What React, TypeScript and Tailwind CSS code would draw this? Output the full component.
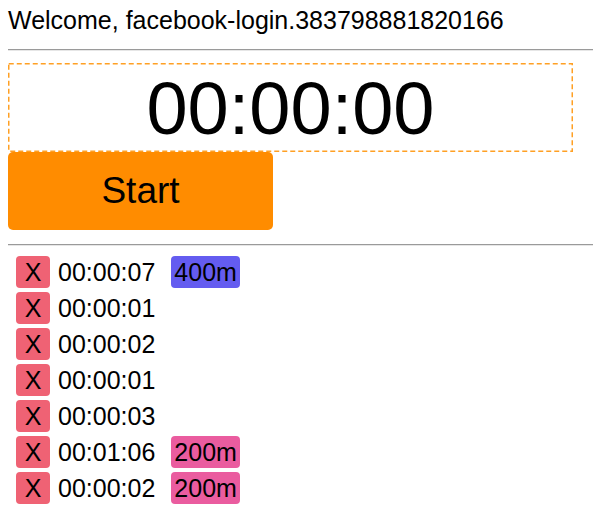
import React from 'react';

const laps = [
  { id: 1, time: '00:00:07', tag: '400m' },
  { id: 2, time: '00:00:01', tag: '' },
  { id: 3, time: '00:00:02', tag: '' },
  { id: 4, time: '00:00:01', tag: '' },
  { id: 5, time: '00:00:03', tag: '' },
  { id: 6, time: '00:01:06', tag: '200m' },
  { id: 7, time: '00:00:02', tag: '200m' },
];

const Rule: React.FC<{ className?: string }> = ({ className }) => (
  <div className={`h-[2px] border-t border-t-[#9a9a9a] border-b border-b-[#e6e6e6] ${className ?? ''}`} />
);

const App: React.FC = () => {
  return (
    <div className="min-h-[525px] bg-white pl-2 pt-[6px] font-['Liberation_Sans',Arial,sans-serif] text-black">
      <div className="text-[25px] leading-[29px]">Welcome, facebook-login.383798881820166</div>

      <Rule className="mt-[14px]" />

      {/* timer, dashed frame drawn over it */}
      <div className="relative mt-[12px] w-[565px] pt-[3px] pb-[1px] text-center text-[74px] leading-[85px]">
        00:00:00
        <svg className="pointer-events-none absolute inset-0 h-full w-full" preserveAspectRatio="none">
          <rect
            x="0.75"
            y="0.75"
            width="563.5"
            height="87.5"
            fill="none"
            stroke="#ffa024"
            strokeWidth="1.5"
            strokeDasharray="5 3"
          />
        </svg>
      </div>

      <button className="flex h-[78px] w-[265px] items-center justify-center rounded-[5px] bg-[#ff8c00] text-[37px] leading-[42px] text-black">
        Start
      </button>

      <Rule className="mt-[14px]" />

      {/* laps */}
      <ul className="mt-[10px] flex flex-col gap-[4px] pl-2">
        {laps.map((lap) => (
          <li key={lap.id} className="flex h-[32px] items-center text-[25px] leading-[32px]">
            <span className="w-[34px] rounded-[4px] bg-[#ef6274] text-center">X</span>
            <span className="ml-2">{lap.time}</span>
            {lap.tag && (
              <span
                className={`ml-4 rounded-[4px] px-[3px] ${
                  lap.tag === '400m' ? 'bg-[#645cf0]' : 'bg-[#ea5c9f]'
                }`}
              >
                {lap.tag}
              </span>
            )}
          </li>
        ))}
      </ul>
    </div>
  );
};

export default App;
